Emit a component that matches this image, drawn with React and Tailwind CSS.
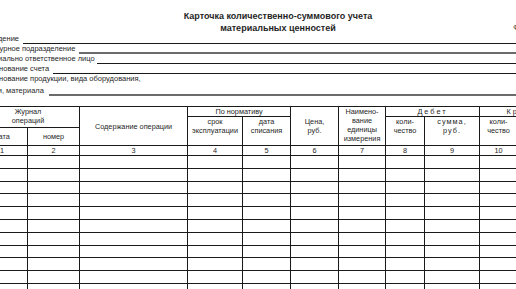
const fields = [
  { label: 'Учреждение', w: 'w-[47px]', line: 'border-b border-[#1a1a1a]' },
  { label: 'Структурное подразделение', w: 'w-[103px]', line: 'border-b-2 border-[#6b6b6b]' },
  { label: 'Материально ответственное лицо', w: 'w-[121px]', line: 'border-b border-[#1a1a1a]' },
  { label: 'Наименование счета', w: 'w-[77px]', line: 'border-b border-[#1a1a1a]' },
  { label: 'Наименование продукции, вида оборудования,', w: 'w-[300px]', line: '' },
  { label: 'мебели, материала', w: 'w-[73px]', line: 'border-b-2 border-[#6b6b6b]' },
]

const cols = ['w-[51px]', 'w-[52px]', 'w-[108px]', 'w-[55px]', 'w-[48px]', 'w-[48px]', 'w-[47px]', 'w-[39px]', 'w-[55px]', 'w-[38px]', 'w-[52px]']

const td = 'border border-[#1a1a1a] p-0 text-center'

export default function App() {
  const rows = Array.from({ length: 11 })

  return (
    <div className="w-[516px] h-[289px] overflow-hidden bg-white">
      <div className="-ml-[24px] w-[604px] font-['Liberation_Sans',Arial,sans-serif] text-[#1f1f1f]">
        {/* шапка */}
        <div className="grid grid-cols-[1fr_auto_1fr] pt-[10px]">
          <div />
          <div className="text-center text-[9px] leading-[12px] font-bold">
            <div>Карточка количественно-суммового учета</div>
            <div>материальных ценностей</div>
          </div>
          <div className="pl-[141px] pt-[12px] text-[7px] leading-[12px] whitespace-nowrap">Форма по ОКУД</div>
        </div>

        {/* реквизиты */}
        <div className="text-[7.5px] leading-[10px]">
          {fields.map((f, i) => (
            <div key={i} className={`flex items-end ${i === 5 ? 'h-[12px]' : 'h-[10px]'}`}>
              <span className={`${f.w} shrink-0 whitespace-nowrap`}>{f.label}</span>
              <span className={`flex-1 ${f.line}`} />
            </div>
          ))}
        </div>

        {/* таблица */}
        <table className="mt-[10px] border-collapse table-fixed w-[593px] text-[7.3px] leading-[9px]">
          <colgroup>
            {cols.map((c, i) => <col key={i} className={c} />)}
          </colgroup>
          <thead>
            <tr className="h-[10px]">
              <td colSpan={2} rowSpan={2} className={`${td} align-top`}>Журнал<br />операций</td>
              <td rowSpan={3} className={`${td} align-middle`}>Содержание операции</td>
              <td colSpan={2} className={td}>По нормативу</td>
              <td rowSpan={3} className={`${td} align-middle`}>Цена,<br />руб.</td>
              <td rowSpan={3} className={`${td} align-top`}>Наимено-<br />вание<br />единицы<br />измерения</td>
              <td colSpan={2} className={`${td} tracking-[2px]`}>Дебет</td>
              <td colSpan={2} className={`${td} tracking-[2px]`}>Кредит</td>
            </tr>
            <tr className="h-[11px]">
              <td rowSpan={2} className={`${td} align-top`}>срок<br />эксплуатации</td>
              <td rowSpan={2} className={`${td} align-top`}>дата<br />списания</td>
              <td rowSpan={2} className={`${td} align-top`}>коли-<br />чество</td>
              <td rowSpan={2} className={`${td} align-top tracking-[1px]`}>сумма,<br />руб.</td>
              <td rowSpan={2} className={`${td} align-top`}>коли-<br />чество</td>
              <td rowSpan={2} className={`${td} align-top tracking-[1px]`}>сумма,<br />руб.</td>
            </tr>
            <tr className="h-[18px]">
              <td className={td}>дата</td>
              <td className={td}>номер</td>
            </tr>
            <tr className="h-[10px]">
              {cols.map((_, i) => <td key={i} className={td}>{i + 1}</td>)}
            </tr>
          </thead>
          <tbody>
            {rows.map((_, r) => (
              <tr key={r} className="h-[12.8px]">
                {cols.map((_, i) => <td key={i} className={td} />)}
              </tr>
            ))}
          </tbody>
        </table>
      </div>
    </div>
  )
}
